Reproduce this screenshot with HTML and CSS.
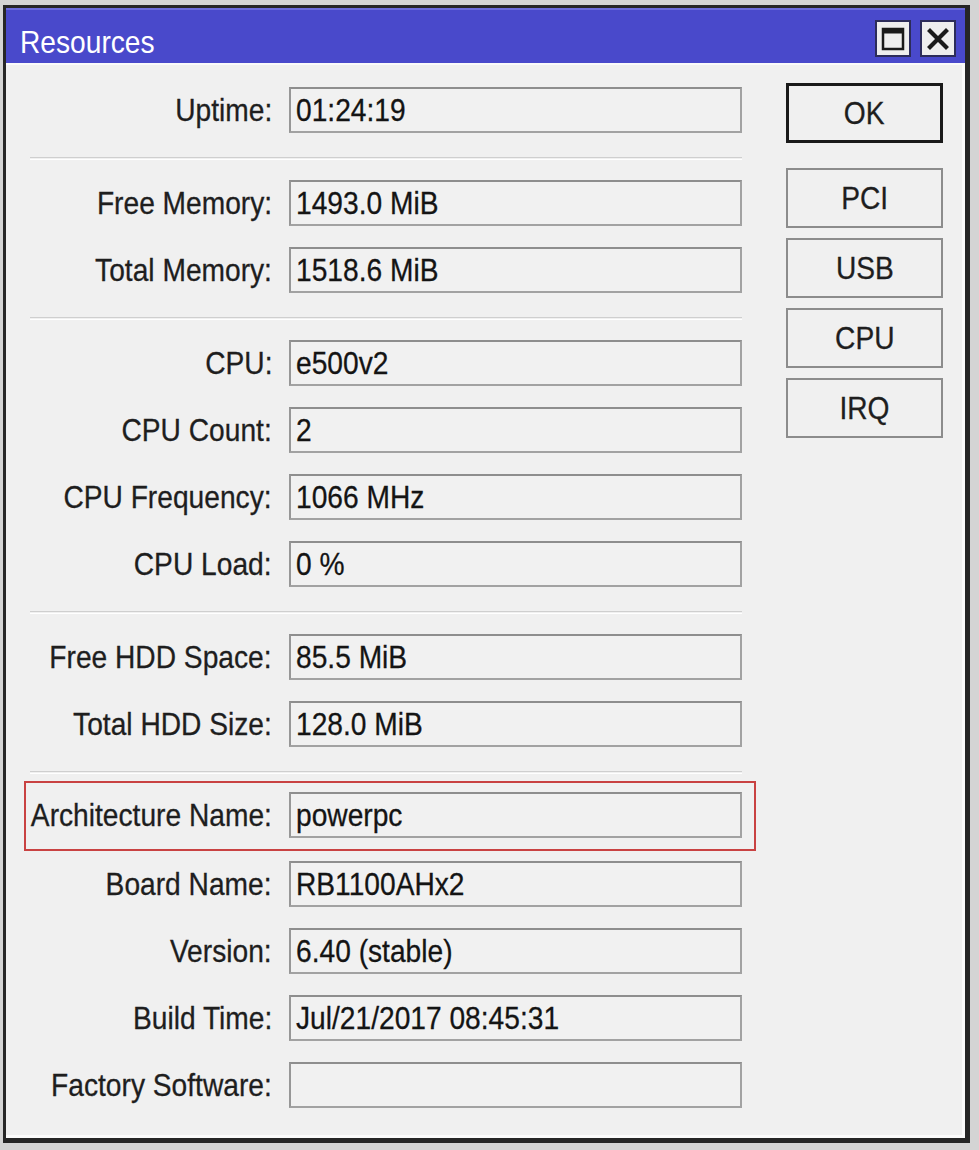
FILE: index.html
```html
<!DOCTYPE html>
<html>
<head>
<meta charset="utf-8">
<title>Resources</title>
<link rel="stylesheet" href="styles.css">
</head>
<body>
<div class="window">
  <div class="titlebar">
    <span class="title"><span class="tx">Resources</span></span>
    <div class="tbtns">
      <span class="tbtn">
        <svg width="26" height="26" viewBox="0 0 26 26"><rect x="3" y="3" width="20" height="20" fill="none" stroke="#1a1a1a" stroke-width="2.5"/><rect x="3" y="3" width="20" height="4.5" fill="#1a1a1a"/></svg>
      </span>
      <span class="tbtn">
        <svg width="26" height="26" viewBox="0 0 26 26"><path d="M5 5 L21 21 M21 5 L5 21" stroke="#1a1a1a" stroke-width="4.2" stroke-linecap="square"/></svg>
      </span>
    </div>
  </div>
  <div class="content">
    <div class="form">
      <div class="row"><span class="label"><span class="tx">Uptime:</span></span><span class="field"><span class="tx">01:24:19</span></span></div>
      <div class="sep"></div>
      <div class="row"><span class="label"><span class="tx">Free Memory:</span></span><span class="field"><span class="tx">1493.0 MiB</span></span></div>
      <div class="row"><span class="label"><span class="tx">Total Memory:</span></span><span class="field"><span class="tx">1518.6 MiB</span></span></div>
      <div class="sep"></div>
      <div class="row"><span class="label"><span class="tx">CPU:</span></span><span class="field"><span class="tx">e500v2</span></span></div>
      <div class="row"><span class="label"><span class="tx">CPU Count:</span></span><span class="field"><span class="tx">2</span></span></div>
      <div class="row"><span class="label"><span class="tx">CPU Frequency:</span></span><span class="field"><span class="tx">1066 MHz</span></span></div>
      <div class="row"><span class="label"><span class="tx">CPU Load:</span></span><span class="field"><span class="tx">0 %</span></span></div>
      <div class="sep"></div>
      <div class="row"><span class="label"><span class="tx">Free HDD Space:</span></span><span class="field"><span class="tx">85.5 MiB</span></span></div>
      <div class="row"><span class="label"><span class="tx">Total HDD Size:</span></span><span class="field"><span class="tx">128.0 MiB</span></span></div>
      <div class="sep"></div>
      <div class="highlight">
        <div class="row"><span class="label"><span class="tx">Architecture Name:</span></span><span class="field"><span class="tx">powerpc</span></span></div>
      </div>
      <div class="row"><span class="label"><span class="tx">Board Name:</span></span><span class="field"><span class="tx">RB1100AHx2</span></span></div>
      <div class="row"><span class="label"><span class="tx">Version:</span></span><span class="field"><span class="tx">6.40 (stable)</span></span></div>
      <div class="row"><span class="label"><span class="tx">Build Time:</span></span><span class="field"><span class="tx">Jul/21/2017 08:45:31</span></span></div>
      <div class="row"><span class="label"><span class="tx">Factory Software:</span></span><span class="field"></span></div>
    </div>
    <div class="buttons">
      <div class="btn primary"><span class="tx">OK</span></div>
      <div class="btn-group">
        <div class="btn"><span class="tx">PCI</span></div>
        <div class="btn"><span class="tx">USB</span></div>
        <div class="btn"><span class="tx">CPU</span></div>
        <div class="btn"><span class="tx">IRQ</span></div>
      </div>
    </div>
  </div>
</div>
</body>
</html>
```

FILE: styles.css
```css
html, body {
  margin: 0;
  padding: 0;
}
body {
  background: #d4d4d4;
  width: 979px;
  height: 1150px;
  overflow: hidden;
  font-family: "Liberation Sans", Arial, sans-serif;
  font-size: 32px;
  color: #1c1c1c;
}
.tx {
  display: inline-block;
  white-space: nowrap;
  flex-shrink: 0;
  transform: scaleX(0.88);
  transform-origin: left center;
  -webkit-text-stroke: 0.3px currentColor;
}
.window {
  box-sizing: border-box;
  margin: 5px 0 0 3px;
  width: 967px;
  height: 1138px;
  border-style: solid;
  border-color: #262626;
  border-width: 3px 5px 5px 3px;
  background: #f0f0f0;
  box-shadow: inset -3px -3px 0 #fbfbfb;
}
.titlebar {
  box-sizing: border-box;
  height: 57px;
  background: #4949cb;
  border-top: 2px solid #6b6bdc;
  border-bottom: 2px solid #fafafa;
  display: flex;
  justify-content: space-between;
  align-items: flex-start;
  padding: 0 9px 0 14px;
}
.title {
  color: #ffffff;
  line-height: 32px;
  margin-top: 16px;
}
.title .tx {
  -webkit-text-stroke: 0;
}
.tbtns {
  display: flex;
  gap: 9px;
  margin-top: 10px;
}
.tbtn {
  box-sizing: border-box;
  width: 36px;
  height: 37px;
  background: #eeeeee;
  border: 2px solid #2c2c5a;
  display: flex;
  align-items: center;
  justify-content: center;
}
.content {
  display: flex;
  align-items: flex-start;
  padding: 18px 0 0 20px;
}
.form {
  width: 716px;
  padding-top: 4px;
}
.row {
  display: flex;
  align-items: center;
  height: 46px;
  margin-bottom: 21px;
}
.label {
  width: 246px;
  margin-right: 17px;
  display: flex;
  justify-content: flex-end;
  color: #1e1e1e;
}
.label .tx {
  transform-origin: right center;
}
.field {
  box-sizing: border-box;
  width: 453px;
  height: 46px;
  border: 2px solid #a2a2a2;
  border-top-color: #8e8e8e;
  border-left-color: #979797;
  background: #f1f1f1;
  padding-left: 5px;
  line-height: 42px;
  overflow: hidden;
  color: #141414;
}
.sep {
  height: 1px;
  margin: 24px 0 20px 4px;
  border-top: 1px solid #cfcfcf;
  border-bottom: 1px solid #ffffff;
}
.highlight {
  margin: -13px -14px 10px -2px;
  border: 2px solid #c94242;
  padding: 9px 12px 2px 0;
}
.highlight .row {
  margin-bottom: 9px;
}
.buttons {
  margin-left: 44px;
  width: 157px;
  display: flex;
  flex-direction: column;
}
.btn {
  box-sizing: border-box;
  width: 157px;
  height: 60px;
  border: 2px solid #8c8c8c;
  background: #f0f0f0;
  display: flex;
  align-items: center;
  justify-content: center;
  color: #1e1e1e;
}
.btn .tx {
  transform-origin: center center;
}
.btn.primary {
  border: 3px solid #1a1a1a;
}
.btn-group {
  margin-top: 25px;
  display: flex;
  flex-direction: column;
  gap: 10px;
}
```
